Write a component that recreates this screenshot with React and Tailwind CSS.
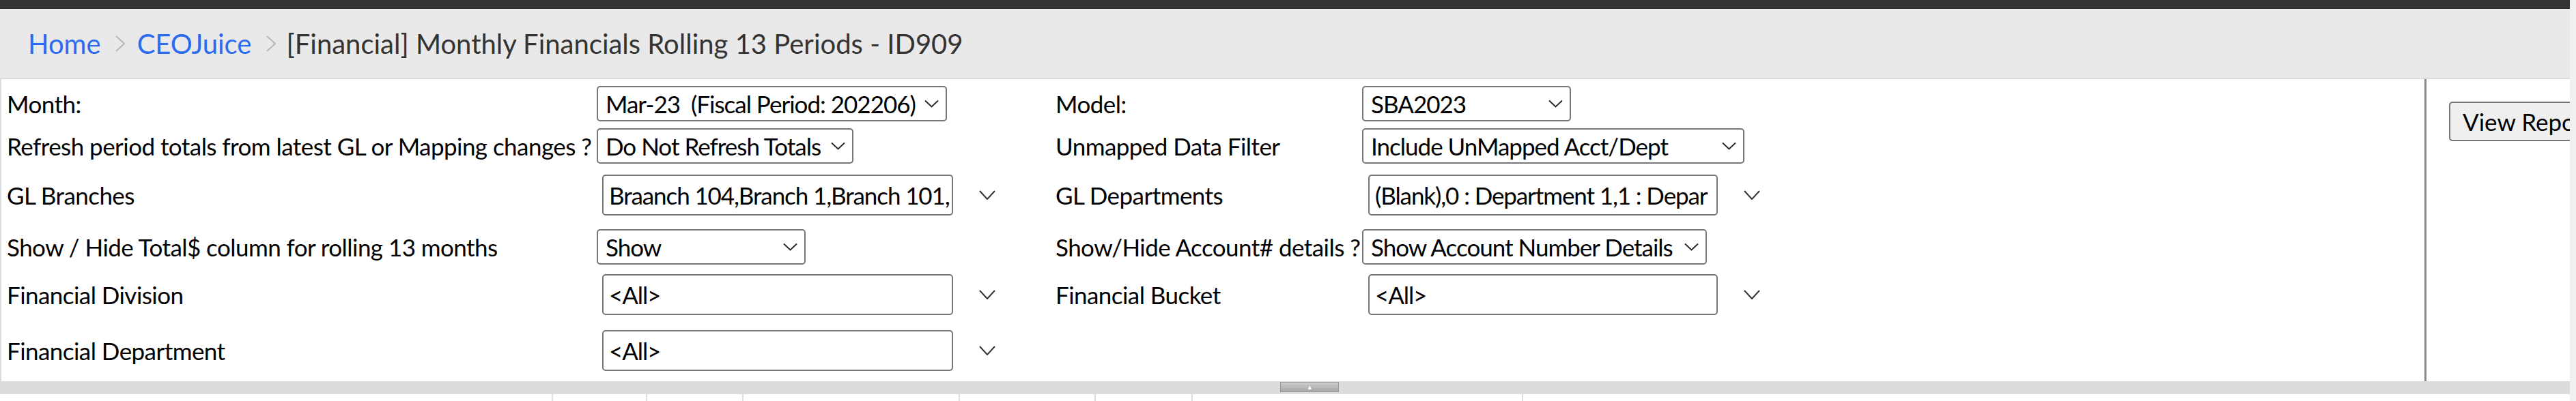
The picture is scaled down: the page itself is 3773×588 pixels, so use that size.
import React from 'react';

const SelectChevron = () => (
  <svg width="21" height="12" viewBox="0 0 21 12" className="shrink-0">
    <polyline points="1,1.5 10.5,10.5 20,1.5" fill="none" stroke="#222" strokeWidth="1.8" />
  </svg>
);

const OuterChevron = () => (
  <svg width="24" height="14" viewBox="0 0 24 14" className="shrink-0">
    <polyline points="1,1 12,13 23,1" fill="none" stroke="#333" strokeWidth="2" />
  </svg>
);

const Crumb = () => (
  <svg width="14" height="24" viewBox="0 0 14 24" className="shrink-0">
    <polyline points="1,1 13,12 1,23" fill="none" stroke="#b8b8b8" strokeWidth="2" />
  </svg>
);

const Select = ({ width, text }) => (
  <div
    className="h-[52px] border-2 border-[#767676] rounded-[5px] bg-white flex items-center justify-between pl-[11px] pr-[10px]"
    style={{ width }}
  >
    <span className="whitespace-pre tracking-[-1px]">{text}</span>
    <SelectChevron />
  </div>
);

const MultiInput = ({ width, text, ml = 8 }) => (
  <div className="flex items-center" style={{ marginLeft: ml }}>
    <div
      className="h-[60px] border-2 border-[#767676] rounded-[5px] bg-white flex items-center pl-[8px] overflow-hidden"
      style={{ width }}
    >
      <span className="whitespace-pre tracking-[-1.1px]">{text}</span>
    </div>
    <div className="ml-[38px]">
      <OuterChevron />
    </div>
  </div>
);

const Row = ({ h, label, control, label2, control2 }) => (
  <div className="flex items-center" style={{ height: h }}>
    <div className="w-[864px] shrink-0 whitespace-nowrap">{label}</div>
    <div className="w-[672px] shrink-0">{control}</div>
    <div className="w-[449px] shrink-0 whitespace-nowrap">{label2}</div>
    <div className="shrink-0">{control2}</div>
  </div>
);

export default function App() {
  return (
    <div
      className="w-[3773px] h-[588px] flex overflow-hidden bg-white text-black text-[35px] tracking-[-0.55px]"
      style={{ fontFamily: 'Lato, "Open Sans", sans-serif' }}
    >
      <div className="w-[3764px] flex flex-col">
        <div className="h-[13px] bg-[#333333]" />
        <div className="h-[103px] bg-[#e9e9e9] border-b-2 border-[#dcdcdc] flex items-center pl-[41px] text-[40px] tracking-normal">
          <span className="text-[#2a6bf2]">Home</span>
          <div className="ml-[21px] mr-[18px]"><Crumb /></div>
          <span className="text-[#2a6bf2]">CEOJuice</span>
          <div className="ml-[21px] mr-[16px]"><Crumb /></div>
          <span className="text-[#333]">[Financial] Monthly Financials Rolling 13 Periods - ID909</span>
        </div>

        <div className="h-[443px] flex">
          <div className="w-[3551px] border-l-2 border-[#dddddd] pl-[8px]">
            <Row
              h={72}
              label="Month:"
              control={<Select width={513} text="Mar-23  (Fiscal Period: 202206)" />}
              label2="Model:"
              control2={<Select width={306} text="SBA2023" />}
            />
            <Row
              h={52}
              label="Refresh period totals from latest GL or Mapping changes ?"
              control={<Select width={376} text="Do Not Refresh Totals" />}
              label2="Unmapped Data Filter"
              control2={<Select width={560} text="Include UnMapped Acct/Dept" />}
            />
            <Row
              h={92}
              label="GL Branches"
              control={<MultiInput width={514} text="Braanch 104,Branch 1,Branch 101," />}
              label2="GL Departments"
              control2={<MultiInput width={512} ml={9} text="(Blank),0 : Department 1,1 : Depar" />}
            />
            <Row
              h={60}
              label="Show / Hide Total$ column for rolling 13 months"
              control={<Select width={306} text="Show" />}
              label2="Show/Hide Account# details ?"
              control2={<Select width={505} text="Show Account Number Details" />}
            />
            <Row
              h={80}
              label="Financial Division"
              control={<MultiInput width={514} text="<All>" />}
              label2="Financial Bucket"
              control2={<MultiInput width={512} ml={9} text="<All>" />}
            />
            <Row
              h={84}
              label="Financial Department"
              control={<MultiInput width={514} text="<All>" />}
            />
          </div>
          <div className="w-[3px] bg-[#888888]" />
          <div className="flex-1 overflow-hidden pt-[33px] pl-[33px]">
            <button className="h-[58px] w-[260px] border-2 border-[#767676] rounded-[5px] bg-[#efefef] pl-[18px] text-left whitespace-nowrap tracking-normal">
              View Report
            </button>
          </div>
        </div>

        <div className="h-[19px] bg-[#dcdcdc] flex items-start">
          <div className="ml-[1875px] mt-[1px] w-[86px] h-[15px] bg-gradient-to-b from-[#cfcfcf] to-[#a6a6a6] border border-[#9a9a9a] flex items-center justify-center">
            <span className="text-white text-[9px] leading-none">▲</span>
          </div>
        </div>

        <div className="h-[10px] flex">
          <div className="w-[808px]" />
          <div className="w-[138px] border-l-2 border-[#dddddd]" />
          <div className="w-[141px] border-l-2 border-[#dddddd]" />
          <div className="w-[317px] border-l-2 border-[#dddddd]" />
          <div className="w-[199px] border-l-2 border-[#dddddd]" />
          <div className="w-[142px] border-l-2 border-[#dddddd]" />
          <div className="w-[484px] border-l-2 border-[#dddddd]" />
          <div className="flex-1 border-l-2 border-[#dddddd]" />
        </div>
      </div>
      <div className="w-[9px] bg-[#f0f0f0]" />
    </div>
  );
}
